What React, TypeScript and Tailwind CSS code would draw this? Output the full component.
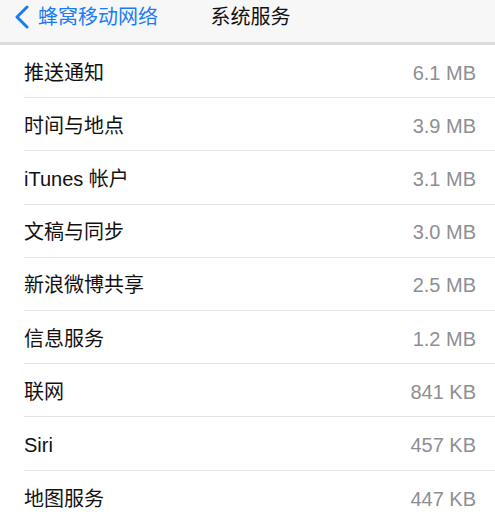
import React from 'react';

const rows: { name: string; size: string }[] = [
  { name: '推送通知', size: '6.1 MB' },
  { name: '时间与地点', size: '3.9 MB' },
  { name: 'iTunes 帐户', size: '3.1 MB' },
  { name: '文稿与同步', size: '3.0 MB' },
  { name: '新浪微博共享', size: '2.5 MB' },
  { name: '信息服务', size: '1.2 MB' },
  { name: '联网', size: '841 KB' },
  { name: 'Siri', size: '457 KB' },
  { name: '地图服务', size: '447 KB' },
];

export default function App() {
  return (
    <div
      className="w-[495px] h-[520px] overflow-hidden bg-white"
      style={{ fontFamily: '"Liberation Sans", "Noto Sans CJK SC", sans-serif' }}
    >
      {/* Nav bar */}
      <div className="relative h-[45px] bg-[#f7f7f8] border-b-[3px] border-[#dcdce0] flex items-center pb-[8px]">
        <div className="flex items-center pl-[14px] text-[#1a7cf5]">
          <svg width="16" height="24" viewBox="0 0 16 24" fill="none">
            <path d="M13 2 L3 12 L13 22" stroke="#1a7cf5" strokeWidth="3" strokeLinecap="round" strokeLinejoin="round" />
          </svg>
          <span className="ml-[8px] text-[20px] leading-none">蜂窝移动网络</span>
        </div>
        <div className="absolute left-0 right-0 top-0 h-[34px] flex items-center justify-center pointer-events-none">
          <span className="ml-[6px] text-[20px] leading-none text-[#111]">系统服务</span>
        </div>
      </div>

      {/* List */}
      <div className="pl-[24px]">
        {rows.map((r, i) => (
          <div
            key={r.name}
            className={`h-[53.2px] flex items-center justify-between pr-[19px] pt-[3px] ${
              i < rows.length - 1 ? 'border-b border-[#e4e4e6]' : ''
            }`}
          >
            <span className="text-[20px] text-[#111]">{r.name}</span>
            <span className="text-[20px] text-[#8e8e93]">{r.size}</span>
          </div>
        ))}
      </div>
    </div>
  );
}
